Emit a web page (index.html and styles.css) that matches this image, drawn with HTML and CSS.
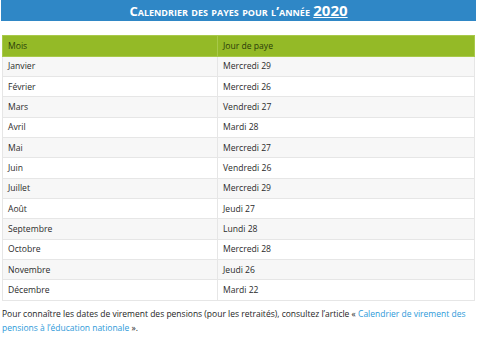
FILE: index.html
```html
<!DOCTYPE html>
<html lang="fr">
<head>
<meta charset="utf-8">
<link rel="stylesheet" href="styles.css">
</head>
<body>
<div class="page">
  <h2 class="title">Calendrier des payes pour l’année <u>2020</u></h2>
  <table class="pay">
    <thead>
      <tr><th>Mois</th><th>Jour de paye</th></tr>
    </thead>
    <tbody>
      <tr><td>Janvier</td><td>Mercredi 29</td></tr>
      <tr><td>Février</td><td>Mercredi 26</td></tr>
      <tr><td>Mars</td><td>Vendredi 27</td></tr>
      <tr><td>Avril</td><td>Mardi 28</td></tr>
      <tr><td>Mai</td><td>Mercredi 27</td></tr>
      <tr><td>Juin</td><td>Vendredi 26</td></tr>
      <tr><td>Juillet</td><td>Mercredi 29</td></tr>
      <tr><td>Août</td><td>Jeudi 27</td></tr>
      <tr><td>Septembre</td><td>Lundi 28</td></tr>
      <tr><td>Octobre</td><td>Mercredi 28</td></tr>
      <tr><td>Novembre</td><td>Jeudi 26</td></tr>
      <tr><td>Décembre</td><td>Mardi 22</td></tr>
    </tbody>
  </table>
  <p class="note">Pour connaître les dates de virement des pensions (pour les retraités), consultez l’article « <a href="#">Calendrier de virement des pensions à l’éducation nationale</a> ».</p>
</div>
</body>
</html>
```
FILE: styles.css
```css
html, body { margin: 0; padding: 0; background: #fff; }
body { font-family: "Open Sans", "DejaVu Sans", sans-serif; color: #2b2b2b; }
.page { padding: 0 4px 0 1px; }
.title {
  margin: 0;
  background: #2f87c6;
  color: #fff;
  text-align: center;
  font-variant: small-caps;
  font-weight: bold;
  font-size: 13px;
  line-height: 21px;
  height: 21px;
}
.title u { font-size: 15px; font-variant: normal; }
.pay {
  margin: 14px 0 0 1px;
  width: calc(100% - 2px);
  border-collapse: collapse;
  font-size: 8.6px;
  border: 1px solid #e6e6e6;
}
.pay th, .pay td {
  text-align: left;
  font-weight: normal;
  padding: 0 5px;
  height: 19.36px;
  border: 1px solid #e6e6e6;
}
.pay th {
  height: 19.5px;
  background: #94ba27;
  color: #2a3a0a;
  border-color: #a8c94a;
}
.pay th:first-child, .pay td:first-child { width: 204px; }
.pay tbody tr:nth-child(odd) td { background: #f7f7f7; }
.note {
  margin: 6px 0 0 1px;
  font-size: 8.5px;
  line-height: 14px;
  color: #1e1e1e;
}
.note a { color: #2e9ad9; text-decoration: none; }
```
